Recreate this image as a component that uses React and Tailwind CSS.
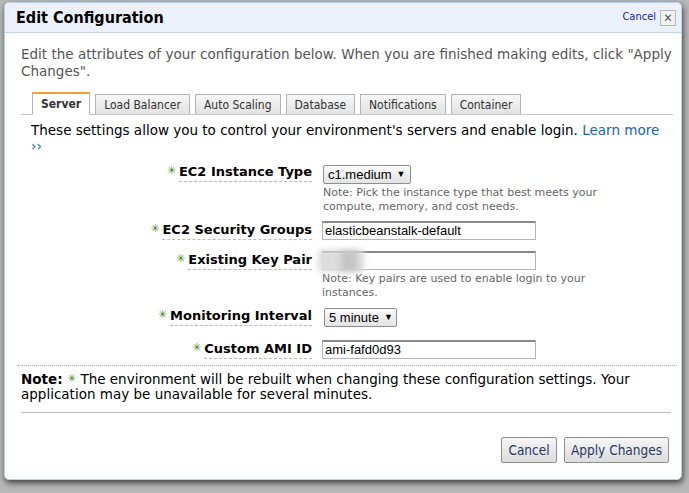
import React from "react";

const Star = ({ cls = "" }) => (
  <span className={`text-[#3c8a1c] text-[11px] leading-none relative top-[-2px] ${cls}`} style={{ fontFamily: "'DejaVu Sans', sans-serif" }}>✳</span>
);

const Label = ({ children }) => (
  <div className="w-[307px] flex justify-end items-start shrink-0">
    <Star cls="mr-[3px] mt-[3px]" />
    <span className="font-bold text-[13px] leading-[16px] text-black border-b border-dashed border-[#bbb] pb-[1px] font-['DejaVu_Sans',sans-serif]">
      {children}
    </span>
  </div>
);

const Select = ({ children, w }) => (
  <div className={`${w} h-[19px] border border-[#8f8f8f] rounded-[2px] bg-gradient-to-b from-[#fbfbfb] to-[#e3e3e3] flex items-center pl-[4px] text-[13px] text-black font-['Liberation_Sans',sans-serif]`}>
    {children}
    <span className="text-[9px] ml-[5px]">▼</span>
  </div>
);

const Input = ({ children, blur }) => (
  <div className="relative w-[214px] h-[19px] border border-[#b5b5b5] border-t-2 border-t-[#8a8a8a] bg-white flex items-center pl-[2px] text-[13px] text-black font-['Liberation_Sans',sans-serif]">
    {children}
    {blur && (
      <>
        <div className="absolute left-[-5px] top-[-3px] w-[46px] h-[22px] bg-[#dcdcdc] blur-[3px]" />
        <div className="absolute left-[18px] top-[-2px] w-[16px] h-[20px] bg-[#c4c4c4] blur-[3px]" />
      </>
    )}
  </div>
);

const Note = ({ children }) => (
  <div className="text-[11px] leading-[14px] text-[#666] mt-[2px] font-['DejaVu_Sans',sans-serif]">{children}</div>
);

const Tab = ({ children, active }) =>
  active ? (
    <div className="h-[23px] mb-[-1px] px-[8px] bg-white border border-[#b4b4b4] border-b-white border-t-2 border-t-[#f0a030] flex items-center text-[12px] font-bold text-[#333]">
      {children}
    </div>
  ) : (
    <div className="h-[20px] px-[8px] bg-gradient-to-b from-[#f7f7f7] to-[#e2e2e2] border border-[#b4b4b4] border-b-0 flex items-center text-[12px] text-[#333]">
      {children}
    </div>
  );

const body = "font-['DejaVu_Sans',sans-serif] text-[13.5px]";

export default function App() {
  return (
    <div className="w-[689px] h-[493px] bg-[#b8b8b8] overflow-hidden pt-[2px] pl-[4px] font-['DejaVu_Sans_Condensed','DejaVu_Sans',sans-serif]">
      <div className="w-[678px] h-[478px] bg-white border border-[#b9d2ec] rounded-[5px] shadow-[1px_3px_6px_rgba(0,0,0,0.65)] flex flex-col overflow-hidden">
        {/* header */}
        <div className="h-[30px] shrink-0 bg-[#eaf1fb] border-b border-[#bdd7f1] flex items-center pl-[11px] pr-[5px]">
          <div className="text-[16px] font-bold text-black flex-1">Edit Configuration</div>
          <span className="text-[11px] text-[#1c1c94] mr-[4px]">Cancel</span>
          <div className="w-[16px] h-[16px] border border-[#b8b8b8] bg-[#f2f2f2] flex items-center justify-center text-[12px] text-[#555] leading-none">✕</div>
        </div>

        {/* intro */}
        <div className={`pl-[16px] pr-[6px] pt-[13px] leading-[17px] text-[#555] ${body}`}>
          Edit the attributes of your configuration below. When you are finished making edits, click "Apply Changes".
        </div>

        {/* tabs */}
        <div className="ml-[16px] mr-[8px] mt-[12px] border-b border-[#c4c4c4] flex items-end gap-[5px] pl-[11px]">
          <Tab active>Server</Tab>
          <Tab>Load Balancer</Tab>
          <Tab>Auto Scaling</Tab>
          <Tab>Database</Tab>
          <Tab>Notifications</Tab>
          <Tab>Container</Tab>
        </div>

        <div className={`pl-[26px] pr-[18px] pt-[7px] leading-[16px] text-black ${body}`}>
          These settings allow you to control your environment's servers and enable login.{" "}
          <span className="text-[#1a64b0]">Learn more ››</span>
        </div>

        {/* form */}
        <div className="flex flex-col">
          <div className="flex gap-[10px] mt-[10px]">
            <Label>EC2 Instance Type</Label>
            <div className="mt-[1px] pl-[1px]">
              <Select w="w-[88px]">c1.medium</Select>
              <Note>
                Note: Pick the instance type that best meets your
                <br />
                compute, memory, and cost needs.
              </Note>
            </div>
          </div>
          <div className="flex gap-[10px] mt-[8px]">
            <Label>EC2 Security Groups</Label>
            <div className="mt-[-1px]">
              <Input>elasticbeanstalk-default</Input>
            </div>
          </div>
          <div className="flex gap-[10px] mt-[12px]">
            <Label>Existing Key Pair</Label>
            <div className="mt-[-1px]">
              <Input blur />
              <Note>
                Note: Key pairs are used to enable login to your
                <br />
                instances.
              </Note>
            </div>
          </div>
          <div className="flex gap-[10px] mt-[8px]">
            <Label>Monitoring Interval</Label>
            <div className="mt-[0px] pl-[2px]">
              <Select w="w-[73px]">5 minute</Select>
            </div>
          </div>
          <div className="flex gap-[10px] mt-[14px]">
            <Label>Custom AMI ID</Label>
            <div className="mt-[-1px]">
              <Input>ami-fafd0d93</Input>
            </div>
          </div>
        </div>

        <div className="ml-[12px] mr-[4px] mt-[6px] border-t border-dotted border-[#aaa]" />

        <div className={`pl-[16px] pr-[40px] pt-[6px] leading-[15px] text-black ${body}`}>
          <span className="font-bold">Note:</span> <Star /> The environment will be rebuilt when changing these configuration settings. Your application may be unavailable for several minutes.
        </div>

        <div className="ml-[16px] mr-[10px] mt-[10px] border-t border-[#bdbdbd]" />

        <div className="flex justify-end gap-[7px] pr-[12px] mt-[24px]">
          <div className="w-[56px] h-[26px] border border-[#8e8e8e] rounded-[2px] bg-gradient-to-b from-[#f6f6f6] to-[#dcdcdc] flex items-center justify-center text-[13.5px] text-[#1f3a68]">Cancel</div>
          <div className="w-[105px] h-[26px] border border-[#8e8e8e] rounded-[2px] bg-gradient-to-b from-[#f6f6f6] to-[#dcdcdc] flex items-center justify-center text-[13.5px] text-[#1f3a68]">Apply Changes</div>
        </div>
      </div>
    </div>
  );
}
